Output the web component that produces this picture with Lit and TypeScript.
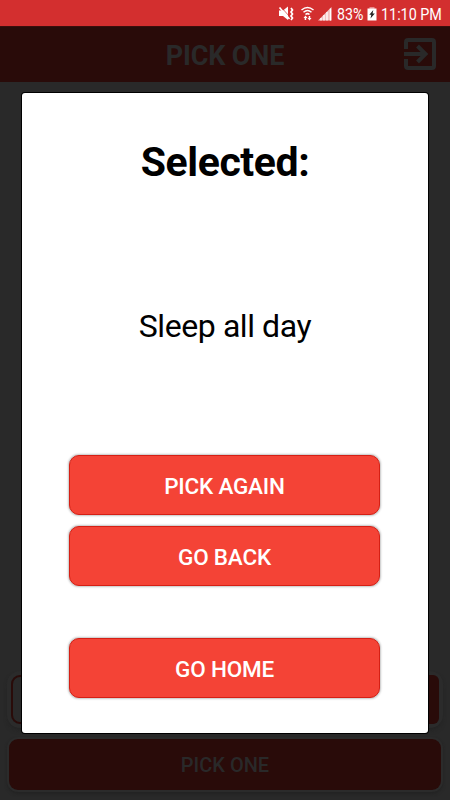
import { LitElement, html, css } from "lit";
import { customElement } from "lit/decorators.js";

@customElement("app-root")
export class AppRoot extends LitElement {
  static styles = css`
    :host {
      display: block;
      position: relative;
      width: 450px;
      height: 800px;
      overflow: hidden;
      background: #292929;
      font-family: Roboto, "Liberation Sans", sans-serif;
    }
    * { box-sizing: border-box; }
    svg { display: block; }
    .screen { display: flex; flex-direction: column; height: 100%; }
    .status {
      height: 26px;
      flex: none;
      background: #d32f2f;
      color: #fff;
      display: flex;
      align-items: center;
      justify-content: flex-end;
      padding: 2px 9px 0 0;
      font-size: 16.5px;
      line-height: 24px;
      white-space: nowrap;
    }
    .status svg { flex: none; }
    .signals { margin-right: 2px; }
    .battery { width: 27px; margin-right: 3px; transform: translateY(1px) scaleX(0.86); transform-origin: left; }
    .clock { width: 60px; margin-left: 4px; transform: translateY(1px) scaleX(0.87); transform-origin: left; }
    .header {
      height: 56px;
      flex: none;
      background: #290b09;
      border-top: 1px solid #3b0e0c;
      display: grid;
      grid-template-columns: 60px 1fr 60px;
      align-items: center;
      color: #292929;
    }
    .title { grid-column: 2; text-align: center; font-size: 27px; font-weight: 700; line-height: 32px; padding-top: 3px; letter-spacing: -0.15px; }
    .exit { justify-self: center; margin: 0 1px 1px 0; }
    .content { flex: 1; display: flex; flex-direction: column; justify-content: flex-end; padding: 0 9px 10px; gap: 15px; }
    .entry { display: flex; justify-content: space-between; height: 49px; margin: 0 2px; border-radius: 9px; box-shadow: 0 0 0 4px #2b2b2b, 0 3px 4px 3px #232323; }
    .field { width: 300px; border: 2px solid #290b09; border-radius: 9px; }
    .add { width: 90px; background: #290b09; border-radius: 6px; }
    .pick {
      height: 51px;
      display: grid;
      place-items: center;
      border-radius: 9px;
      background: #290b09;
      color: #292929;
      font-size: 20px;
      font-weight: 500;
      box-shadow: 0 0 0 2px #2b2b2b, 0 2px 3px 2px #232323;
    }
    .dialog {
      position: absolute;
      left: 22px;
      top: 93px;
      width: 406px;
      height: 640px;
      border-radius: 3px;
      background: #fff;
      box-shadow: 0 0 0 1px #000;
      display: flex;
      flex-direction: column;
      align-items: center;
      color: #000;
    }
    .heading { margin: 44.500px 0 0; font-size: 41px; line-height: 48px; font-weight: 700; letter-spacing: -0.42px; }
    .choice { margin: 120.500px 0 0; font-size: 32px; line-height: 40px; letter-spacing: -0.42px; }
    .actions { width: 311px; margin: 109px 0 0; display: flex; flex-direction: column; gap: 11px; }
    .action {
      height: 60px;
      padding: 1px 0 0;
      border: 1px solid #d51f14;
      border-radius: 10px;
      background: #f44336;
      color: #fff;
      font: 500 22.5px/30px Roboto, sans-serif;
      letter-spacing: -0.2px;
      box-shadow: 0 0 2px 1px #c4c4c4;
    }
    .actions { margin-right: 1px; }
    .home { margin-top: 41px; }
  `;

  render() {
    return html`
      <div class="screen">
        <div class="status">
          <svg class="signals" width="60" height="20" viewBox="0 0 60 20" fill="#fff">
            <path d="M4 6.500h4l5-4v13.500l-5-4H4z" />
            <path d="M4.500 3.500l10 11.500M16 4l1.500 2-1.500 2 1.500 2-1.500 2 1.500 2-1.500 2" fill="none" stroke="#fff" stroke-width="1.700" />
            <path d="M6.500 3.500l8 9" stroke="#d32f2f" stroke-width="0.700" />
            <path d="M26.500 6q6-5 12 0M28.500 8.300q4-3.500 8 0M30.500 10.500q2-1.800 4 0" fill="none" stroke="#fff" stroke-width="1.500" />
            <path d="M30.500 11.500l2 2.500h-1.300v2h-1.500v-2h-1.200zM34.500 16.500l-2-2.500h1.200v-2h1.500v2h1.300z" />
            <path d="M43 16.500L56.500 3v13.500z" opacity="0.700" />
            <path d="M46 14V16.500M49 11V16.500M52 8V16.500M55.500 4.500v12" stroke="#fff" stroke-width="1.300" />
          </svg>
          <span class="battery">83%</span>
          <svg width="10" height="16" viewBox="0 0 10 16">
            <path d="M2.500 1h5V3h-5z" fill="#e88c8c" />
            <path d="M.5 2.500h9V14.500h-9z" fill="#fff" />
            <path d="M6.300 4L2.300 8.800h2L3.500 12.500l4.300-5H5.600z" fill="#222" />
          </svg>
          <span class="clock">11:10 PM</span>
        </div>
        <div class="header">
          <div class="title">PICK ONE</div>
          <svg class="exit" width="34" height="34" viewBox="0 0 34 34" fill="none" stroke="#292929" stroke-width="4">
            <path d="M3 12V5q0-2 2-2h24q2 0 2 2v24q0 2-2 2H5q-2 0-2-2v-7" />
            <path d="M1 17h21M14.500 9l8 8-8 8" />
          </svg>
        </div>
        <div class="content">
          <div class="entry"><div class="field"></div><div class="add"></div></div>
          <div class="pick">PICK ONE</div>
        </div>
      </div>
      <div class="dialog">
        <h1 class="heading">Selected:</h1>
        <p class="choice">Sleep all day</p>
        <div class="actions">
          <button class="action">PICK AGAIN</button>
          <button class="action">GO BACK</button>
          <button class="action home">GO HOME</button>
        </div>
      </div>
    `;
  }
}
